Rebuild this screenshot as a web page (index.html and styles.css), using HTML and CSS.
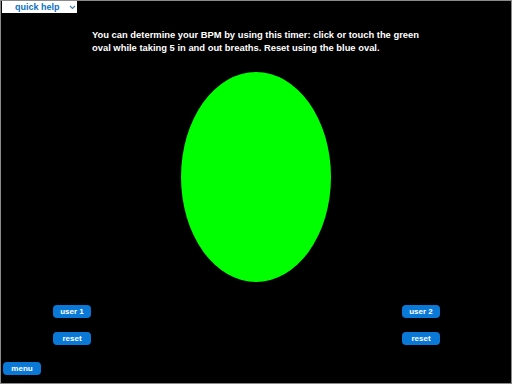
FILE: index.html
```html
<!DOCTYPE html>
<html>
<head>
  <link rel="stylesheet" href="styles.css">
</head>
<body>
  <div class="page">
    <select class="help">
      <option>quick help</option>
    </select>

    <p class="intro">You can determine your BPM by using this timer: click or touch the green oval while taking 5 in and out breaths. Reset using the blue oval.</p>

    <div class="oval"></div>

    <div class="controls">
      <div class="column">
        <button class="btn">user 1</button>
        <button class="btn">reset</button>
      </div>
      <div class="column">
        <button class="btn">user 2</button>
        <button class="btn">reset</button>
      </div>
    </div>

    <button class="btn menu">menu</button>
  </div>
</body>
</html>
```

FILE: styles.css
```css
body {
  margin: 0;
  background: #000;
  font-family: "Liberation Sans", Arial, sans-serif;
}
.page {
  width: 512px;
  height: 384px;
  box-sizing: border-box;
  border: 1px solid #8a8a8a;
  display: flex;
  flex-direction: column;
  align-items: flex-start;
}
.help {
  width: 75px;
  height: 12px;
  margin: 0 0 0 1px;
  padding: 0 0 0 13px;
  border: none;
  border-radius: 0;
  background: #fff;
  color: #0b6fc7;
  font-family: inherit;
  font-size: 9px;
  font-weight: bold;
  line-height: 12px;
  -webkit-appearance: none;
  appearance: none;
  background-image: url("data:image/svg+xml;utf8,<svg xmlns='http://www.w3.org/2000/svg' width='7' height='5' viewBox='0 0 7 5'><path d='M1 1l2.5 2.5L6 1' fill='none' stroke='%234a7fb5' stroke-width='1.2'/></svg>");
  background-repeat: no-repeat;
  background-position: 67px 4px;
}
.intro {
  margin: 15px 0 0 91px;
  width: 340px;
  color: #fff;
  font-size: 9.4px;
  font-weight: bold;
  line-height: 13px;
}
.oval {
  align-self: center;
  width: 150px;
  height: 210px;
  margin-top: 18px;
  border-radius: 50%;
  background: #00ff00;
}
.controls {
  align-self: stretch;
  display: flex;
  justify-content: space-between;
  margin-top: 23px;
  padding: 0 71px 0 52px;
}
.column {
  display: flex;
  flex-direction: column;
  gap: 14px;
}
.btn {
  width: 38px;
  height: 13px;
  padding: 0;
  border: none;
  border-radius: 4px;
  background: #0a78d6;
  color: #fff;
  font-family: inherit;
  font-size: 8px;
  font-weight: bold;
  line-height: 13px;
  cursor: pointer;
}
.menu {
  margin: 17px 0 0 2px;
}
```
